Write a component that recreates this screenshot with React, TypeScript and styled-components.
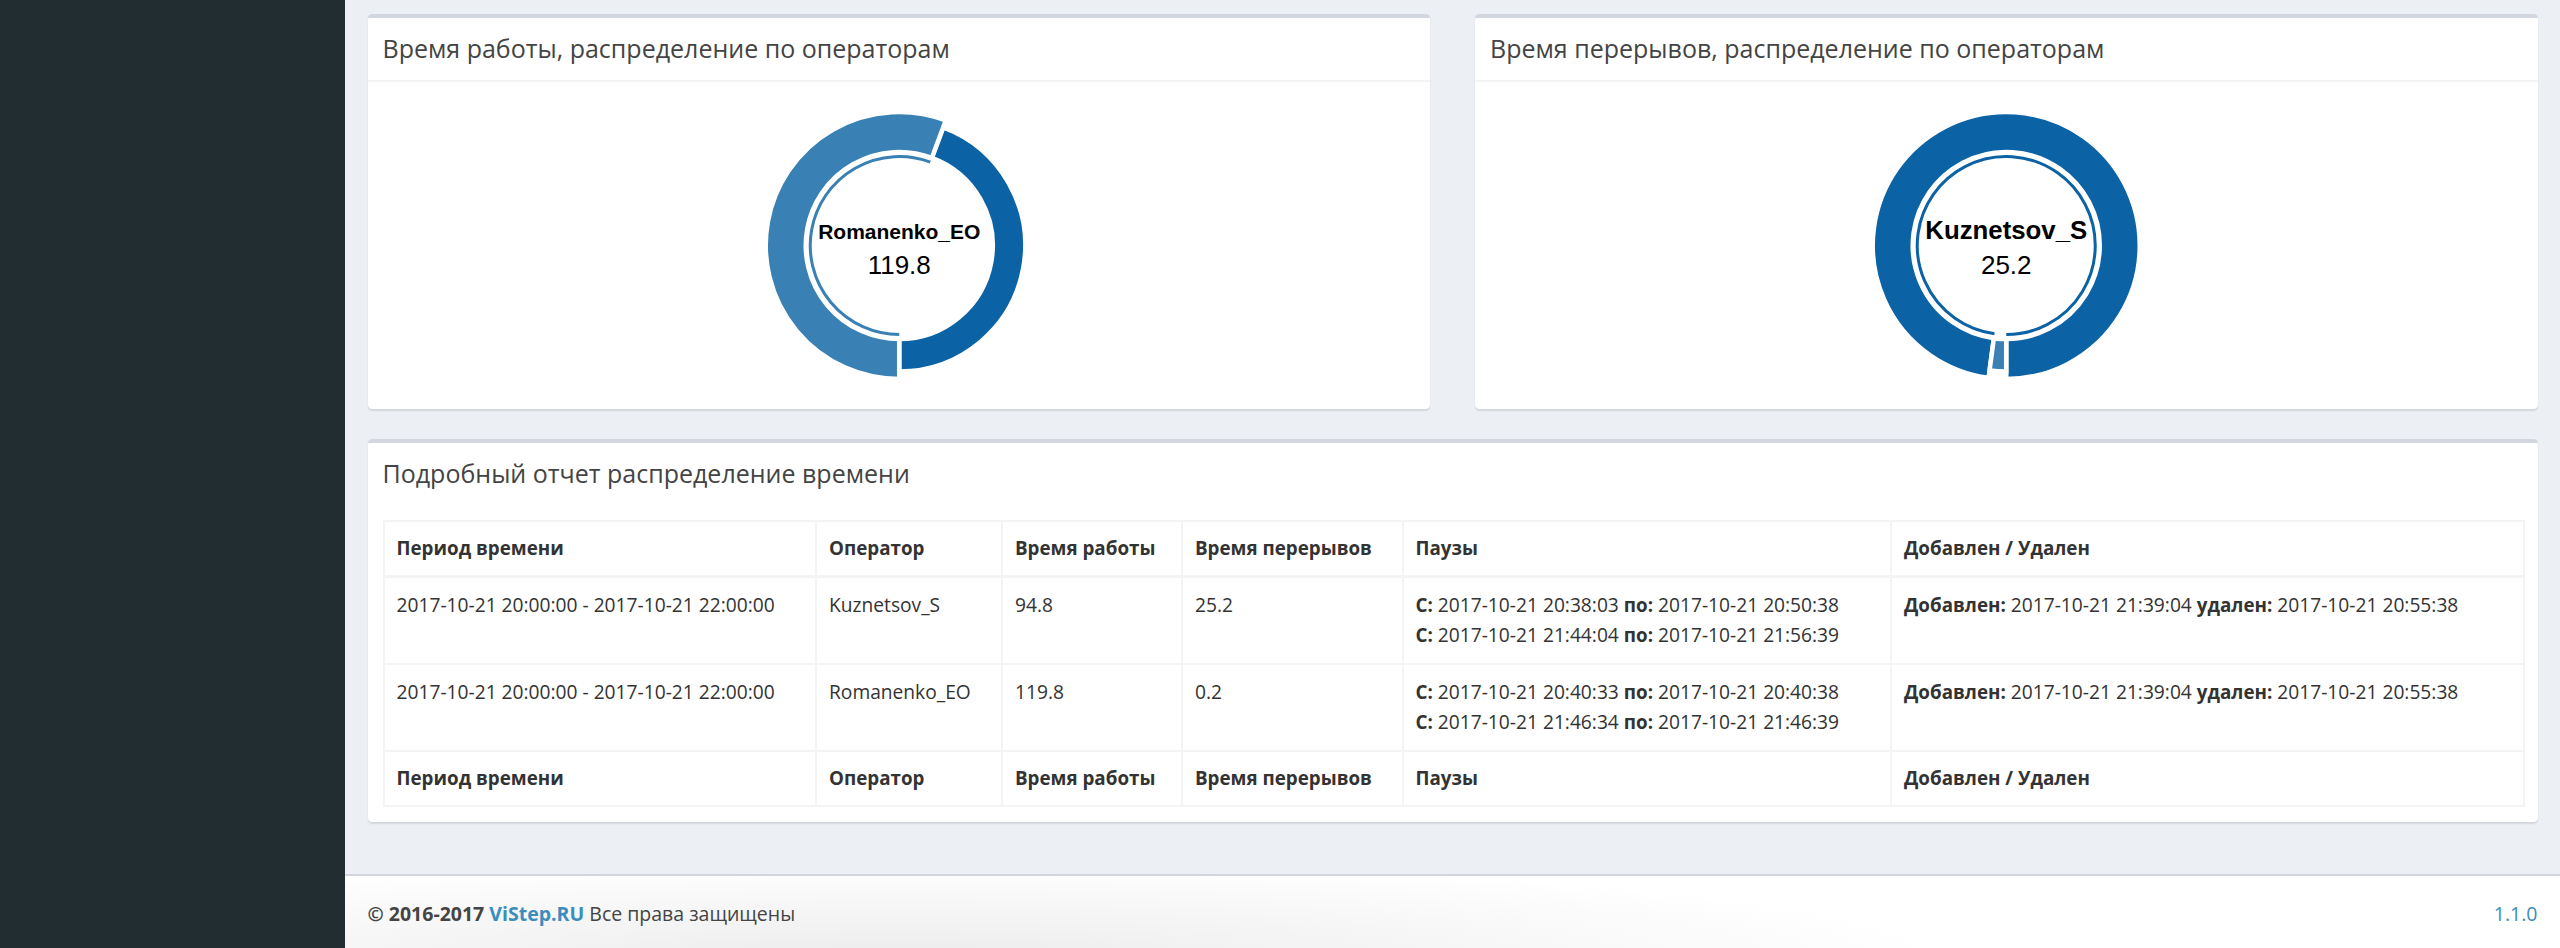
import React from "react";
import styled, { createGlobalStyle } from "styled-components";

interface IDonutItem {
  label: string;
  value: number;
  color: string;
}

interface IDonutChart {
  data: Array<IDonutItem>;
  labelSize: number;
}

interface IReportRow {
  period: string;
  operator: string;
  work: string;
  pause: string;
  pauses: Array<[string, string]>;
  added: string;
  removed: string;
}

const GlobalStyle = createGlobalStyle`
  html, body {
    margin: 0;
    padding: 0;
    background: #ecf0f5;
  }

  body {
    font-family: "Open Sans", "Noto Sans", sans-serif;
    font-size: 19.2px;
    color: #333;
  }

  * {
    box-sizing: border-box;
  }
`;

const Wrapper = styled.div`
  display: flex;
  min-height: 948px;
`;

const Sidebar = styled.aside`
  width: 345px;
  flex-shrink: 0;
  background: #222d32;
`;

const Main = styled.div`
  flex: 1;
  display: flex;
  flex-direction: column;
  min-width: 0;
`;

const Content = styled.main`
  padding: 13.5px 22.5px 22.5px;
`;

const Row = styled.div`
  display: grid;
  grid-template-columns: 1fr 1fr;
  column-gap: 45px;
`;

const Box = styled.section`
  background: #fff;
  border-top: 4px solid #d2d6de;
  border-radius: 4.5px;
  box-shadow: 0 1.5px 1.5px rgba(0, 0, 0, 0.1);
  margin-bottom: 30px;
`;

const BoxHeader = styled.div<{ $withBorder?: boolean }>`
  height: ${({ $withBorder }) => ($withBorder ? "64px" : "62px")};
  padding: 0 15px;
  display: flex;
  align-items: center;
  border-bottom: ${({ $withBorder }) =>
    $withBorder ? "2px solid #f4f4f4" : "none"};
`;

const BoxTitle = styled.h3`
  margin: 0;
  font-size: 25px;
  font-weight: 400;
  line-height: 1;
  color: #444;
`;

const BoxBody = styled.div`
  padding: 15px;
`;

const ChartSvg = styled.svg`
  display: block;
  width: 100%;
  height: 297px;
`;

const Table = styled.table`
  width: 100%;
  table-layout: fixed;
  border-collapse: collapse;
  border: 2px solid #f4f4f4;

  th,
  td {
    border: 2px solid #f4f4f4;
    text-align: left;
    vertical-align: top;
    line-height: 30px;
    white-space: nowrap;
    overflow: hidden;
  }

  th {
    padding: 11.5px 12px;
    font-size: 18.8px;
    font-weight: 700;
    color: #333;
  }

  td {
    padding: 12.5px 12px;
  }

  thead th {
    border-bottom-width: 3px;
  }

  b {
    font-size: 18.8px;
    font-weight: 700;
  }
`;

const Footer = styled.footer`
  border-top: 2px solid #d2d6de;
  padding: 22.5px;
  display: flex;
  justify-content: space-between;
  align-items: center;
  font-size: 19.5px;
  line-height: 30px;
  color: #444;
  background: radial-gradient(
    ellipse 1500px 140px at 25% 110%,
    #ececec 0%,
    #ffffff 70%
  );
`;

const FooterLink = styled.a<{ $bold?: boolean }>`
  color: #3c8dbc;
  text-decoration: none;
  font-weight: ${({ $bold }) => ($bold ? 700 : 400)};
`;

// Morris.js donut geometry, scaled by 1.5
const SCALE = 1.5;
const CHART_W = 1032.5;
const CHART_H = 297;

const point = (cx: number, cy: number, r: number, a: number) =>
  `${cx + r * Math.sin(a)},${cy + r * Math.cos(a)}`;

const segmentPath = (
  cx: number,
  cy: number,
  r1: number,
  r2: number,
  p0: number,
  p1: number
) => {
  const long = p1 - p0 > Math.PI ? 1 : 0;
  return `M${point(cx, cy, r1, p0)}A${r1},${r1},0,${long},0,${point(
    cx,
    cy,
    r1,
    p1
  )}L${point(cx, cy, r2, p1)}A${r2},${r2},0,${long},1,${point(
    cx,
    cy,
    r2,
    p0
  )}Z`;
};

const arcPath = (cx: number, cy: number, r: number, p0: number, p1: number) => {
  const long = p1 - p0 > Math.PI ? 1 : 0;
  return `M${point(cx, cy, r, p0)}A${r},${r},0,${long},0,${point(
    cx,
    cy,
    r,
    p1
  )}`;
};

const DonutChart = ({ data, labelSize }: IDonutChart) => {
  const cx = CHART_W / 2;
  const cy = CHART_H / 2;
  const wCss = (Math.min(cx, cy) / SCALE - 10) / 3;
  const w = wCss * SCALE;
  const total = data.reduce((sum, item) => sum + item.value, 0);
  const min = 5 / (2 * wCss);
  const C = 1.9999 * Math.PI - min * data.length;
  const maxValue = Math.max(...data.map((item) => item.value));
  const selected = data.findIndex((item) => item.value === maxValue);

  let last = 0;
  const segments = data.map((item, index) => {
    const next = last + min + C * (item.value / total);
    const seg = { ...item, p0: last, p1: next, index };
    last = next;
    return seg;
  });

  const inner = w * 2;
  const top = selected >= 0 ? data[selected] : data[0];

  return (
    <ChartSvg viewBox={`0 0 ${CHART_W} ${CHART_H}`}>
      {segments.map(({ color, p0, p1, index }) => {
        const isSelected = index === selected;
        return (
          <g key={index}>
            <path
              d={arcPath(cx, cy, inner, p0, p1)}
              fill="none"
              stroke={color}
              strokeWidth={2 * SCALE}
              opacity={isSelected ? 1 : 0}
            />
            <path
              d={segmentPath(
                cx,
                cy,
                inner + 3 * SCALE,
                isSelected ? inner + w : inner + w - 5 * SCALE,
                p0,
                p1
              )}
              fill={color}
              stroke="#ffffff"
              strokeWidth={3 * SCALE}
            />
          </g>
        );
      })}
      <text
        x={cx}
        y={cy - 6.5}
        textAnchor="middle"
        fontFamily="'Liberation Sans', Arial, sans-serif"
        fontWeight={700}
        fontSize={labelSize}
        fill="#000"
      >
        {top.label}
      </text>
      <text
        x={cx}
        y={cy + 28}
        textAnchor="middle"
        fontFamily="'Liberation Sans', Arial, sans-serif"
        fontSize={26}
        fill="#000"
      >
        {top.value}
      </text>
    </ChartSvg>
  );
};

const workData: Array<IDonutItem> = [
  { label: "Kuznetsov_S", value: 94.8, color: "#0b62a4" },
  { label: "Romanenko_EO", value: 119.8, color: "#3980b5" },
];

const breakData: Array<IDonutItem> = [
  { label: "Kuznetsov_S", value: 25.2, color: "#0b62a4" },
  { label: "Romanenko_EO", value: 0.2, color: "#3980b5" },
];

const reportRows: Array<IReportRow> = [
  {
    period: "2017-10-21 20:00:00 - 2017-10-21 22:00:00",
    operator: "Kuznetsov_S",
    work: "94.8",
    pause: "25.2",
    pauses: [
      ["2017-10-21 20:38:03", "2017-10-21 20:50:38"],
      ["2017-10-21 21:44:04", "2017-10-21 21:56:39"],
    ],
    added: "2017-10-21 21:39:04",
    removed: "2017-10-21 20:55:38",
  },
  {
    period: "2017-10-21 20:00:00 - 2017-10-21 22:00:00",
    operator: "Romanenko_EO",
    work: "119.8",
    pause: "0.2",
    pauses: [
      ["2017-10-21 20:40:33", "2017-10-21 20:40:38"],
      ["2017-10-21 21:46:34", "2017-10-21 21:46:39"],
    ],
    added: "2017-10-21 21:39:04",
    removed: "2017-10-21 20:55:38",
  },
];

const columns = [
  { title: "Период времени", width: 432.5 },
  { title: "Оператор", width: 186 },
  { title: "Время работы", width: 180 },
  { title: "Время перерывов", width: 220.5 },
  { title: "Паузы", width: 488.5 },
  { title: "Добавлен / Удален", width: 632.5 },
];

const HeadRow = () => (
  <tr>
    {columns.map(({ title }) => (
      <th key={title}>{title}</th>
    ))}
  </tr>
);

const App = () => {
  return (
    <>
      <GlobalStyle />
      <Wrapper>
        <Sidebar />
        <Main>
          <Content>
            <Row>
              <Box>
                <BoxHeader $withBorder>
                  <BoxTitle>Время работы, распределение по операторам</BoxTitle>
                </BoxHeader>
                <BoxBody>
                  <DonutChart data={workData} labelSize={21} />
                </BoxBody>
              </Box>
              <Box>
                <BoxHeader $withBorder>
                  <BoxTitle>Время перерывов, распределение по операторам</BoxTitle>
                </BoxHeader>
                <BoxBody>
                  <DonutChart data={breakData} labelSize={25.8} />
                </BoxBody>
              </Box>
            </Row>

            <Box>
              <BoxHeader>
                <BoxTitle>Подробный отчет распределение времени</BoxTitle>
              </BoxHeader>
              <BoxBody>
                <Table>
                  <colgroup>
                    {columns.map(({ title, width }) => (
                      <col key={title} style={{ width }} />
                    ))}
                  </colgroup>
                  <thead>
                    <HeadRow />
                  </thead>
                  <tbody>
                    {reportRows.map((row) => (
                      <tr key={row.operator}>
                        <td>{row.period}</td>
                        <td>{row.operator}</td>
                        <td>{row.work}</td>
                        <td>{row.pause}</td>
                        <td>
                          {row.pauses.map(([from, to], index) => (
                            <div key={`${row.operator}${index}`}>
                              <b>С:</b> {from} <b>по:</b> {to}
                            </div>
                          ))}
                        </td>
                        <td>
                          <b>Добавлен:</b> {row.added} <b>удален:</b>{" "}
                          {row.removed}
                        </td>
                      </tr>
                    ))}
                  </tbody>
                  <tfoot>
                    <HeadRow />
                  </tfoot>
                </Table>
              </BoxBody>
            </Box>
          </Content>

          <Footer>
            <div>
              <b>© 2016-2017</b> <FooterLink $bold>ViStep.RU</FooterLink> Все
              права защищены
            </div>
            <FooterLink>1.1.0</FooterLink>
          </Footer>
        </Main>
      </Wrapper>
    </>
  );
};

export default App;
